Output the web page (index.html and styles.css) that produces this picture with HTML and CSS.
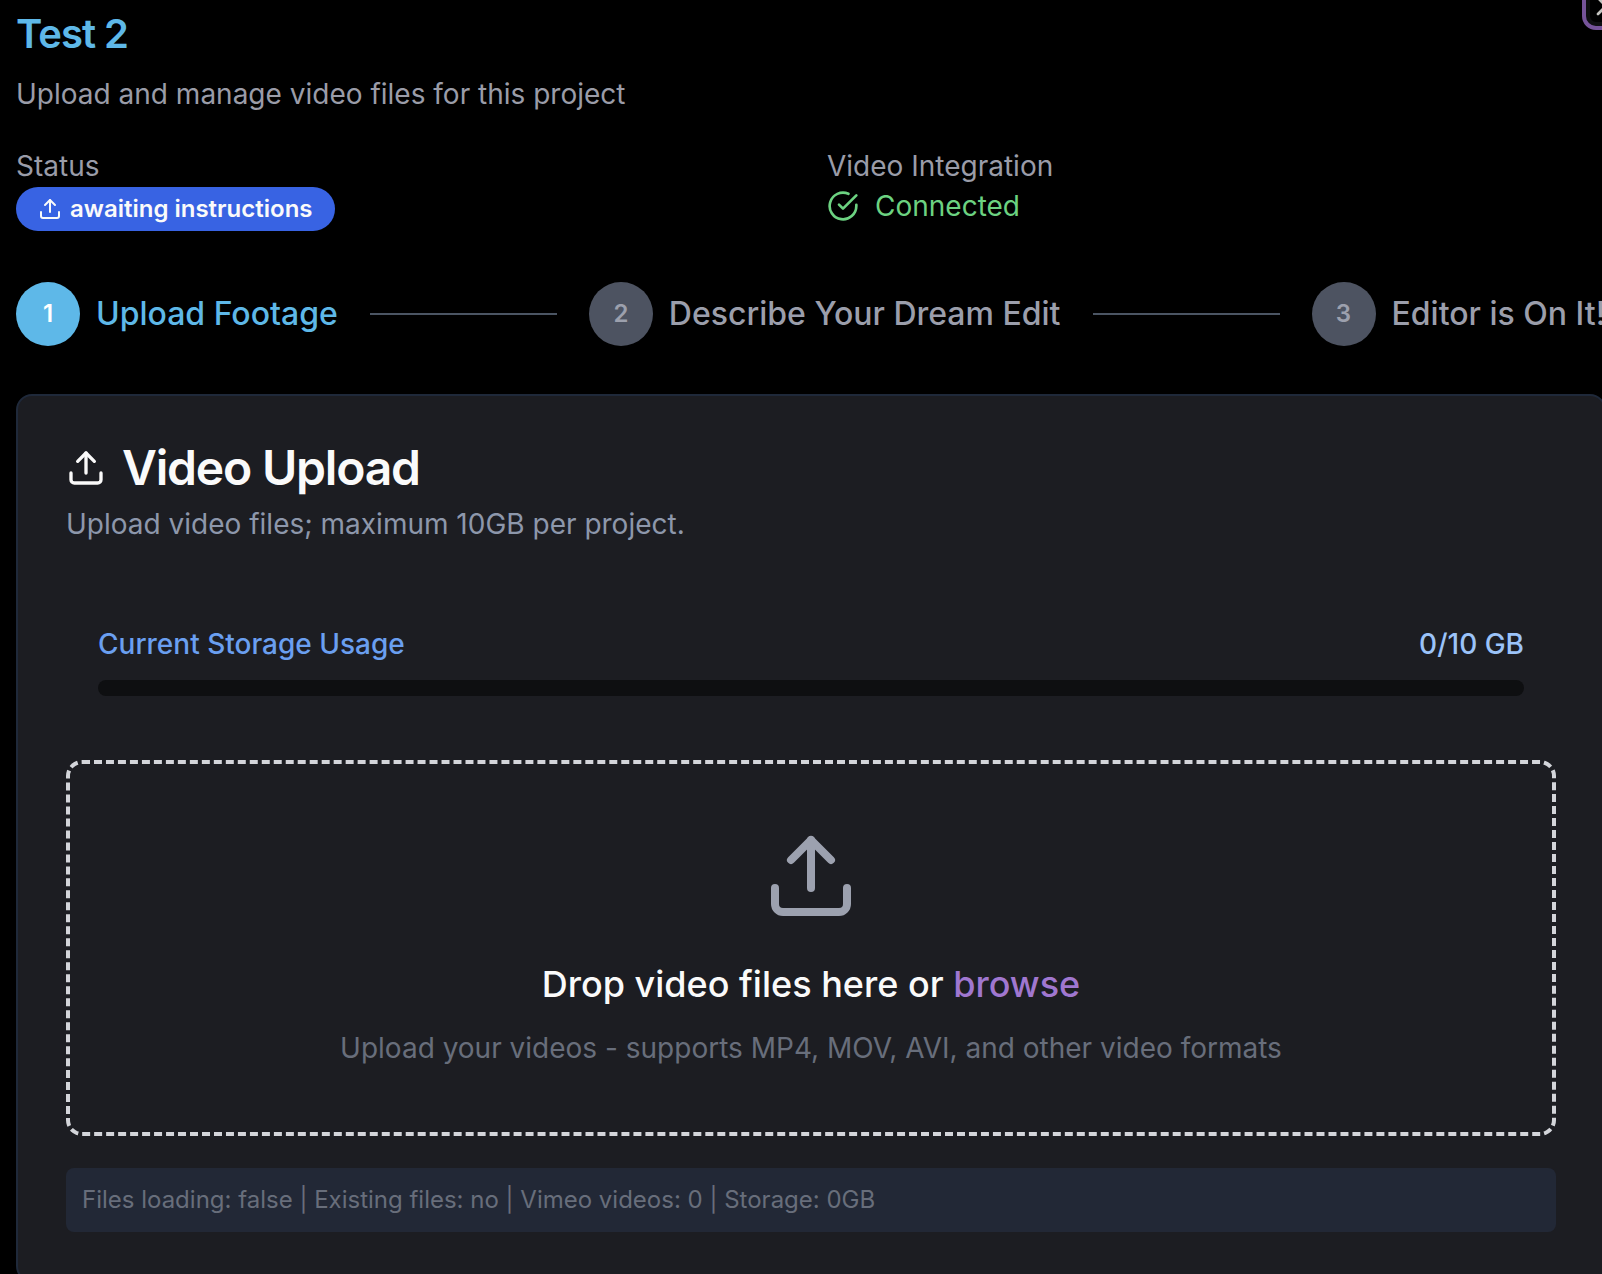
FILE: index.html
```html
<!DOCTYPE html>
<html lang="en">
<head>
<meta charset="utf-8">
<title>Test 2</title>
<link rel="stylesheet" href="styles.css">
</head>
<body>
<svg class="sprite" aria-hidden="true">
  <symbol id="upload" viewBox="0 0 24 24"><path d="M21 15v4a2 2 0 0 1-2 2H5a2 2 0 0 1-2-2v-4"/><path d="M17 8l-5-5-5 5"/><path d="M12 3v12"/></symbol>
  <symbol id="check" viewBox="0 0 24 24"><path d="M22 11.08V12a10 10 0 1 1-5.93-9.14"/><path d="M22 4 12 14.01l-3-3"/></symbol>
  <symbol id="close" viewBox="0 0 24 24"><path d="M18 6 6 18"/><path d="m6 6 12 12"/></symbol>
</svg>
<main class="dialog">
  <button class="close" aria-label="Close"><svg class="icon"><use href="#close"/></svg></button>
  <header>
    <h1 class="title">Test 2</h1>
    <p class="text">Upload and manage video files for this project</p>
  </header>
  <section class="meta">
    <div>
      <div class="text">Status</div>
      <span class="badge"><svg class="icon"><use href="#upload"/></svg><span class="badge-text">awaiting instructions</span></span>
    </div>
    <div>
      <div class="text">Video Integration</div>
      <div class="connected"><svg class="icon"><use href="#check"/></svg><span>Connected</span></div>
    </div>
  </section>
  <nav class="steps">
    <div class="step active"><span class="num">1</span><span class="label">Upload Footage</span></div>
    <span class="line"></span>
    <div class="step"><span class="num">2</span><span class="label">Describe Your Dream Edit</span></div>
    <span class="line"></span>
    <div class="step"><span class="num">3</span><span class="label">Editor is On It!</span></div>
  </nav>
  <section class="card">
    <h2 class="card-title"><svg class="icon"><use href="#upload"/></svg><span>Video Upload</span></h2>
    <p class="card-desc">Upload video files; maximum 10GB per project.</p>
    <div class="storage">
      <div class="storage-row"><span class="storage-name">Current Storage Usage</span><span class="storage-value">0/10 GB</span></div>
      <div class="bar"></div>
    </div>
    <div class="drop">
      <svg class="icon"><use href="#upload"/></svg>
      <p class="drop-title">Drop video files here or <span class="browse">browse</span></p>
      <p class="drop-hint">Upload your videos - supports MP4, MOV, AVI, and other video formats</p>
    </div>
    <div class="debug"><span>Files loading: false | Existing files: no | Vimeo videos: 0 | Storage: 0GB</span></div>
  </section>
</main>
</body>
</html>
```
FILE: styles.css
```css
* { box-sizing: border-box; margin: 0; }
html, body { height: 1274px; overflow: hidden; background: #000; }
body {
  font-family: Inter, sans-serif;
  font-size: 28px;
  line-height: 40px;
  font-optical-sizing: none;
  color: #9ca3af;
  -webkit-font-smoothing: antialiased;
}
.sprite { display: none; }
.icon {
  flex: none;
  fill: none;
  stroke: currentColor;
  stroke-width: 2;
  stroke-linecap: round;
  stroke-linejoin: round;
}
.dialog { position: relative; width: 1622px; padding: 14px 16px 0; }
.close {
  position: absolute;
  left: 1582px;
  top: -18px;
  width: 48px;
  height: 48px;
  padding: 4px;
  border: 4px solid #76549a;
  border-radius: 14px;
  background: #000;
  box-shadow: inset 0 0 0 4px #0e0f11;
  color: #c4c4c0;
}
.close .icon { display: block; width: 32px; height: 32px; }
.title {
  font-size: 40px;
  line-height: 40px;
  font-weight: 600;
  letter-spacing: -0.025em;
  color: #5eb8e8;
  margin-bottom: 20px;
}
.text { color: #9a9ca8; white-space: nowrap; }
.meta { display: grid; grid-template-columns: 811px 1fr; margin-top: 32px; height: 88px; }
.badge {
  display: flex;
  align-items: center;
  gap: 8px;
  width: max-content;
  height: 44px;
  margin-top: 1px;
  padding: 0 22px;
  border-radius: 22px;
  background: #3863e3;
  color: #fafafa;
  font-size: 24px;
  font-weight: 600;
  line-height: 32px;
}
.badge .icon { width: 24px; height: 24px; }
.connected { display: flex; align-items: center; gap: 16px; color: #6cd281; }
.connected .icon { width: 32px; height: 32px; }
.steps { display: flex; align-items: center; gap: 32px; margin-top: 48px; }
.step { display: flex; align-items: center; gap: 16px; flex: none; }
.num {
  display: flex;
  align-items: center;
  justify-content: center;
  width: 64px;
  height: 64px;
  border-radius: 50%;
  background: #4d5361;
  color: #9ca0ad;
  font-size: 24px;
  font-weight: 600;
}
.label { font-size: 32px; line-height: 48px; font-weight: 500; white-space: nowrap; color: #9b9eab; }
.active .num { background: #5eb8e8; color: #fff; }
.active .label { color: #5eb8e8; }
.line { flex: none; width: 187px; height: 2px; background: #4b5563; }
.card {
  width: 1590px;
  height: 888px;
  margin-top: 48px;
  padding: 48px;
  border: 2px solid #1f293a;
  border-radius: 16px;
  background: #1c1d22;
}
.card-title {
  display: flex;
  align-items: center;
  gap: 16px;
  font-size: 48px;
  line-height: 48px;
  font-weight: 600;
  letter-spacing: -0.025em;
  color: #fafafa;
}
.card-title .icon { width: 40px; height: 40px; }
.card-desc { margin-top: 12px; color: #8d97ab; }
.storage { margin-top: 48px; padding: 32px; }
.storage-row { display: flex; justify-content: space-between; font-weight: 500; }
.storage-name { color: #6a9ff0; }
.storage-value { color: #9bc3f9; }
.bar { height: 16px; margin-top: 16px; border-radius: 8px; background: #0e0f11; }
.drop {
  display: flex;
  flex-direction: column;
  align-items: center;
  height: 376px;
  margin-top: 32px;
  padding-top: 64px;
  border: 4px dashed #d3d5da;
  border-radius: 16px;
}
.drop .icon { width: 96px; height: 96px; color: #9ca1af; }
.drop-title { margin-top: 32px; font-size: 36px; line-height: 56px; font-weight: 500; color: #fafafa; }
.browse { color: #a077d0; }
.drop-hint { margin-top: 16px; color: #686e7b; }
.debug {
  margin-top: 32px;
  padding: 16px;
  border-radius: 8px;
  background: #222836;
  color: #686e7b;
  font-size: 24px;
  line-height: 32px;
}
```
